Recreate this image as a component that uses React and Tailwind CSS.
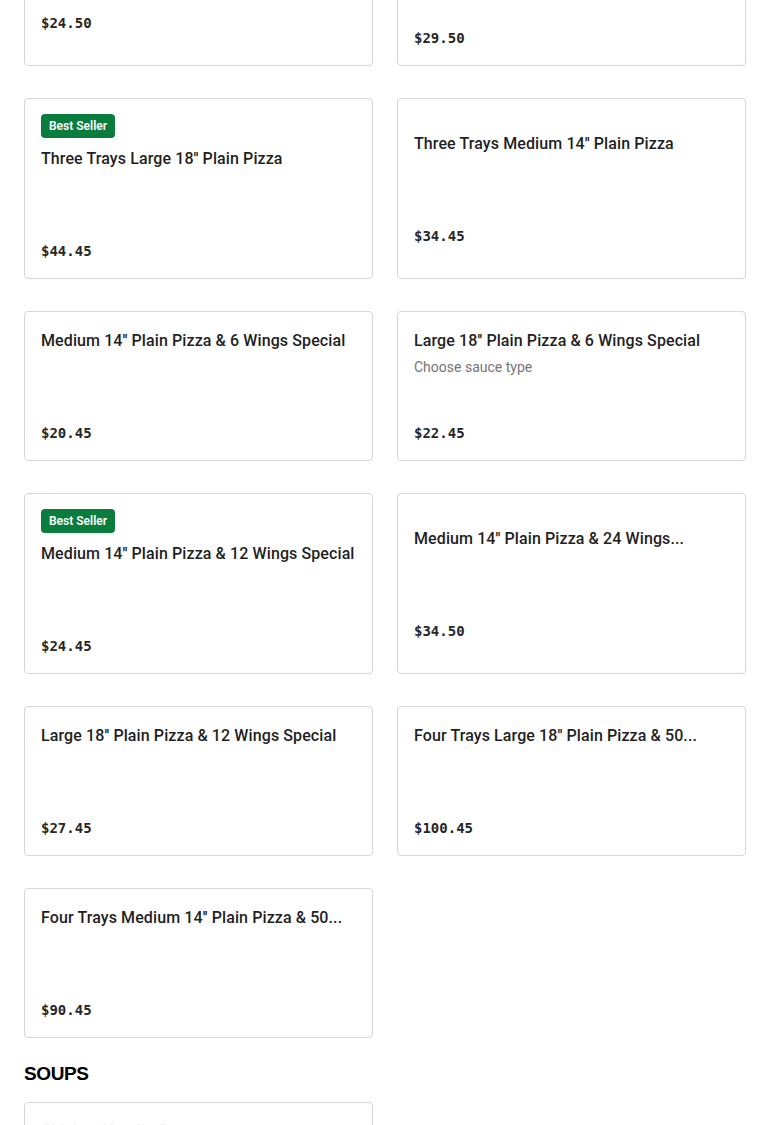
const items = [
  [
    { title: "Two Trays Medium 14'' Plain Pizza", price: "$24.50" },
    { title: "Two Trays Large 18'' Plain Pizza", price: "$29.50", badge: true },
  ],
  [
    { title: "Three Trays Large 18'' Plain Pizza", price: "$44.45", badge: true },
    { title: "Three Trays Medium 14'' Plain Pizza", price: "$34.45" },
  ],
  [
    { title: "Medium 14'' Plain Pizza & 6 Wings Special", price: "$20.45" },
    { title: "Large 18'' Plain Pizza & 6 Wings Special", price: "$22.45", desc: "Choose sauce type" },
  ],
  [
    { title: "Medium 14'' Plain Pizza & 12 Wings Special", price: "$24.45", badge: true },
    { title: "Medium 14'' Plain Pizza & 24 Wings...", price: "$34.50" },
  ],
  [
    { title: "Large 18'' Plain Pizza & 12 Wings Special", price: "$27.45" },
    { title: "Four Trays Large 18'' Plain Pizza & 50...", price: "$100.45" },
  ],
  [{ title: "Four Trays Medium 14'' Plain Pizza & 50...", price: "$90.45" }],
];

const ItemCard = ({ item }) => (
  <div className="flex flex-col justify-center rounded-[4px] border border-[#d6d6d6] bg-white px-4 pt-[15px] pb-4">
    {item.badge && (
      <div className="mb-[7px] flex">
        <span className="rounded-[4px] bg-[#0a7d3e] px-2 py-[4px] text-[12px] leading-[16px] font-semibold text-white">
          Best Seller
        </span>
      </div>
    )}
    <div className="flex h-[117px] flex-col">
      <p className="mt-[2px] text-[16px] leading-[24px] font-medium tracking-[0.1px] text-[#1f1f1f]">{item.title}</p>
      <p className="mt-[4px] h-[20px] text-[14px] leading-[20px] text-[#767676]">{item.desc}</p>
      <p className="mt-auto font-['DejaVu_Sans_Mono',monospace] text-[14px] leading-[22px] font-semibold text-[#262626]">
        {item.price}
      </p>
    </div>
  </div>
);

export default function App() {
  return (
    <div className="h-[1125px] overflow-hidden bg-white font-['Roboto',sans-serif]">
      <div className="-mt-[115px] px-6">
        <div className="flex flex-col gap-8">
          {items.map((row, i) => (
            <div key={i} className="grid grid-cols-2 gap-6">
              {row.map((item) => (
                <ItemCard key={item.title} item={item} />
              ))}
            </div>
          ))}
        </div>
        <h2 className="mt-[26px] font-['Liberation_Sans',sans-serif] text-[19px] leading-[20px] font-black tracking-[-0.4px] text-black">
          SOUPS
        </h2>
        <div className="mt-[18px] grid grid-cols-2 gap-6">
          <div className="h-[150px] rounded-[4px] border border-[#d6d6d6] px-4 py-4">
            <p className="text-[16px] leading-[24px] font-medium text-[#f0f0f0]">Chicken Noodle Soup</p>
          </div>
        </div>
      </div>
    </div>
  );
}
